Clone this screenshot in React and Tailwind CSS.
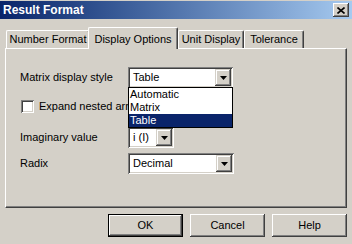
import React from "react";

const raised =
  "shadow-[inset_-1px_-1px_#404040,inset_1px_1px_#ffffff,inset_-2px_-2px_#808080,inset_2px_2px_#d4d0c8]";
const sunken =
  "shadow-[inset_1px_1px_#808080,inset_-1px_-1px_#ffffff,inset_2px_2px_#404040,inset_-2px_-2px_#d4d0c8]";

function Arrow() {
  return (
    <svg width="7" height="4" viewBox="0 0 7 4">
      <path d="M0 0h7L3.5 4z" fill="#000" />
    </svg>
  );
}

function Combo({ value, width, children }) {
  return (
    <div className={`relative h-[21px] ${width}`}>
      <div className={`h-full flex bg-white p-[2px] ${sunken}`}>
        <div className="flex-1 flex items-center pl-[3px] overflow-hidden whitespace-nowrap">
          {value}
        </div>
        <div className="w-[16px] h-[17px] bg-[#d4d0c8] flex items-center justify-center shadow-[inset_-1px_-1px_#404040,inset_1px_1px_#d4d0c8,inset_-2px_-2px_#808080,inset_2px_2px_#ffffff]">
          <Arrow />
        </div>
      </div>
      {children}
    </div>
  );
}

function Tab({ label, active, className }) {
  if (active) {
    return (
      <div
        className={`relative z-10 h-[22px] -mb-px bg-[#d4d0c8] border-l border-t border-r border-l-white border-t-white border-r-[#404040] rounded-t-[2px] shadow-[inset_-1px_0_#808080] flex items-start justify-center pt-[3px] ${className}`}
      >
        {label}
      </div>
    );
  }
  return (
    <div
      className={`h-[18px] bg-[#d4d0c8] border-l border-t border-r border-l-white border-t-white border-r-[#404040] rounded-t-[2px] shadow-[inset_-1px_0_#808080] flex items-center justify-center ${className}`}
    >
      {label}
    </div>
  );
}

function Button({ label, isDefault }) {
  if (isDefault) {
    return (
      <div className="w-[75px] h-[23px] border border-black">
        <div className={`h-full flex items-center justify-center bg-[#d4d0c8] ${raised}`}>
          {label}
        </div>
      </div>
    );
  }
  return (
    <div className={`w-[75px] h-[23px] flex items-center justify-center bg-[#d4d0c8] ${raised}`}>
      {label}
    </div>
  );
}

export default function App() {
  return (
    <div className="w-[352px] h-[244px] overflow-hidden bg-[#d4d0c8] pt-px text-[11px] text-black font-['Liberation_Sans',Arial,sans-serif] select-none">
      {/* Title bar */}
      <div className="h-[18px] flex items-center justify-between pl-[3px] pr-[3px] bg-linear-to-r from-[#0a246a] to-[#a6caf0]">
        <span className="text-white font-bold text-[12px]">Result Format</span>
        <div className={`w-[16px] h-[14px] bg-[#d4d0c8] flex items-center justify-center ${raised}`}>
          <svg width="8" height="7" viewBox="0 0 8 7">
            <path d="M0.5 0.5L7.5 6.5M7.5 0.5L0.5 6.5" stroke="#000" strokeWidth="1.6" />
          </svg>
        </div>
      </div>

      {/* Tabs */}
      <div className="mt-[8px] h-[21px] flex items-end pl-[6px]">
        <Tab label="Number Format" className="w-[84px]" />
        <Tab label="Display Options" active className="w-[90px] -ml-[2px]" />
        <Tab label="Unit Display" className="w-[66px]" />
        <Tab label="Tolerance" className="w-[60px]" />
      </div>

      {/* Panel */}
      <div className="mx-[5px] h-[160px] border-l border-t border-r border-b border-l-white border-t-white border-r-[#404040] border-b-[#404040] shadow-[inset_-1px_-1px_#808080] pl-[14px] pt-[18px]">
        <div className="h-[21px] flex items-center">
          <span className="w-[108px]">Matrix display style</span>
          <Combo value="Table" width="w-[105px]">
            <div className="absolute left-0 top-[20px] z-20 w-[105px] border border-black bg-white">
              <div className="h-[13px] leading-[13px] pl-px">Automatic</div>
              <div className="h-[13px] leading-[13px] pl-px">Matrix</div>
              <div className="h-[13px] leading-[13px] pl-px bg-[#0a246a] text-white">Table</div>
            </div>
          </Combo>
        </div>

        {/* label is cut where the open list covers it */}
        <div className="mt-[12px] h-[13px] flex items-center pl-px">
          <div className={`w-[13px] h-[13px] bg-white ${sunken}`} />
          <span className="ml-[5px] w-[90px] overflow-hidden whitespace-nowrap">Expand nested arrays</span>
        </div>

        <div className="mt-[14px] h-[21px] flex items-center">
          <span className="w-[108px]">Imaginary value</span>
          <Combo value="i (I)" width="w-[46px]" />
        </div>

        <div className="mt-[5px] h-[21px] flex items-center">
          <span className="w-[108px]">Radix</span>
          <Combo value="Decimal" width="w-[106px]" />
        </div>
      </div>

      {/* Buttons */}
      <div className="mt-[6px] flex justify-end gap-[7px] pr-[5px]">
        <Button label="OK" isDefault />
        <Button label="Cancel" />
        <Button label="Help" />
      </div>
    </div>
  );
}
